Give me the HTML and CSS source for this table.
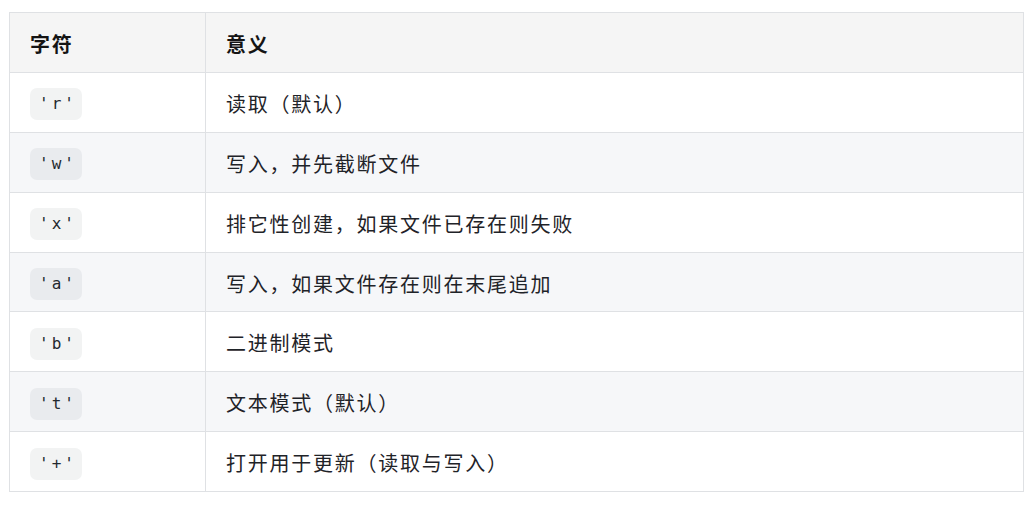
FILE: index.html
```html
<!DOCTYPE html>
<html lang="zh-CN">
<head>
<meta charset="utf-8">
<title>文件模式</title>
<link rel="stylesheet" href="styles.css">
</head>
<body>
<table class="modes">
  <thead>
    <tr><th class="c1">字符</th><th>意义</th></tr>
  </thead>
  <tbody>
    <tr><td><code>'r'</code></td><td>读取（默认）</td></tr>
    <tr><td><code>'w'</code></td><td>写入，并先截断文件</td></tr>
    <tr><td><code>'x'</code></td><td>排它性创建，如果文件已存在则失败</td></tr>
    <tr><td><code>'a'</code></td><td>写入，如果文件存在则在末尾追加</td></tr>
    <tr><td><code>'b'</code></td><td>二进制模式</td></tr>
    <tr><td><code>'t'</code></td><td>文本模式（默认）</td></tr>
    <tr><td><code>'+'</code></td><td>打开用于更新（读取与写入）</td></tr>
  </tbody>
</table>
</body>
</html>
```
FILE: styles.css
```css
html, body { background: #ffffff; }
body {
  margin: 12px 0 0 9px;
  font-family: "Noto Sans CJK SC", "Noto Sans", sans-serif;
  color: #1f2328;
}
.modes {
  border-collapse: collapse;
  width: 1015px;
  font-size: 20px;
  letter-spacing: 1.75px;
}
.modes th, .modes td {
  border: 1px solid #dfe1e4;
  padding: 2px 20px 0;
  height: 56.9px;
  text-align: left;
  vertical-align: middle;
}
.modes th {
  background: #f5f5f5;
  font-weight: 700;
  color: #141414;
}
.modes .c1 { width: 155px; }
.modes tbody tr:nth-child(even) td { background: #f6f7f9; }
.modes code {
  display: inline-block;
  font-family: "DejaVu Sans Mono", monospace;
  font-size: 16px;
  letter-spacing: 3px;
  line-height: 32px;
  padding: 0 5px 0 9px;
  background: #f2f3f3;
  border-radius: 7px;
  color: #24292f;
}
.modes tbody tr:nth-child(even) code { background: #e9ebee; }
```
